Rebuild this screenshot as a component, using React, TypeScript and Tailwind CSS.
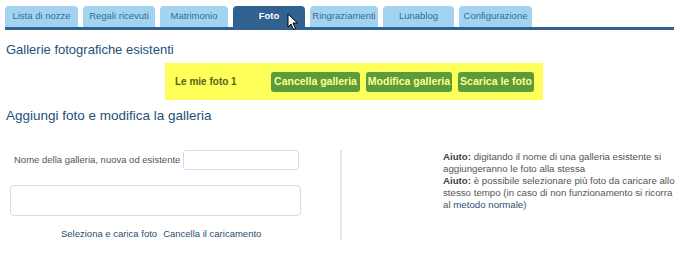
import React from 'react';

const tabs = [
  { label: 'Lista di nozze', w: 'w-[73px]' },
  { label: 'Regali ricevuti', w: 'w-[72px]' },
  { label: 'Matrimonio', w: 'w-[68px]' },
  { label: 'Foto', w: 'w-[72px]', active: true },
  { label: 'Ringraziamenti', w: 'w-[68px]' },
  { label: 'Lunablog', w: 'w-[71px]' },
  { label: 'Configurazione', w: 'w-[73px]' },
];

const buttons = [
  { label: 'Cancella galleria', w: 'w-[89px]' },
  { label: 'Modifica galleria', w: 'w-[86px]' },
  { label: 'Scarica le foto', w: 'w-[76px]' },
];

function Cursor() {
  return (
    <svg className="absolute left-[287px] top-[13px]" width="12" height="18" viewBox="0 0 12 18">
      <path d="M1 1 L1 14 L4 11 L6.5 16.5 L8.5 15.5 L6 10 L10.5 10 Z" fill="#fff" stroke="#000" strokeWidth="1" strokeLinejoin="round" />
    </svg>
  );
}

export default function App() {
  return (
    <div className="relative w-[680px] h-[269px] overflow-hidden bg-white font-['Liberation_Sans',sans-serif]">
      <nav className="pt-[6px] pl-[5px]">
        <div className="flex gap-[5px]">
          {tabs.map((t) => (
            <div
              key={t.label}
              className={`${t.w} h-[21px] rounded-t-[4px] flex items-center justify-center text-[9.5px] whitespace-nowrap ${
                t.active ? 'bg-[#2f6290] text-white font-bold' : 'bg-[#a2d4f2] text-[#3a6a95]'
              }`}
            >
              {t.label}
            </div>
          ))}
        </div>
        <div className="h-[3px] w-[669px] bg-[#2f6290]" />
      </nav>
      <Cursor />

      <h2 className="mt-[12px] ml-[6px] text-[13px] leading-[16px] text-[#24507a]">Gallerie fotografiche esistenti</h2>

      <div className="mt-[5px] ml-[165px] w-[378px] h-[37px] bg-[#ffff5a] flex items-center pl-[10px]">
        <span className="text-[10px] font-bold text-[#56621a] w-[96px] whitespace-nowrap">Le mie foto 1</span>
        <div className="flex gap-[6px]">
          {buttons.map((b) => (
            <span
              key={b.label}
              className={`${b.w} h-[20px] rounded-[3px] bg-[#5b9a3d] text-[#ffff8a] text-[10.5px] font-bold flex items-center justify-center whitespace-nowrap`}
            >
              {b.label}
            </span>
          ))}
        </div>
      </div>

      <h2 className="mt-[7px] ml-[6px] text-[13.5px] leading-[17px] text-[#24507a]">Aggiungi foto e modifica la galleria</h2>

      <div className="mt-[26px] flex">
        <div className="w-[340px] pl-[10px]">
          <div className="flex items-center">
            <span className="w-[173px] pl-[4px] text-[9.5px] text-[#555] whitespace-nowrap">Nome della galleria, nuova od esistente</span>
            <div className="w-[116px] h-[20px] border border-[#c8dff2] rounded-[3px]" />
          </div>
          <div className="mt-[15px] w-[291px] h-[31px] border border-[#c8dff2] rounded-[4px]" />
          <div className="mt-[11px] pl-[51px] flex gap-[6px] text-[9.5px] text-[#2b4d70] whitespace-nowrap">
            <span>Seleziona e carica foto</span>
            <span>Cancella il caricamento</span>
          </div>
        </div>
        <div className="w-[2px] h-[90px] bg-[#e6e6e6]" />
        <div className="ml-[101px] pt-[1px] text-[9.7px] leading-[12px] text-[#555] whitespace-nowrap">
          <p>
            <b className="text-[#444]">Aiuto:</b> digitando il nome di una galleria esistente si
            <br />
            aggiungeranno le foto alla stessa
          </p>
          <p>
            <b className="text-[#444]">Aiuto:</b> è possibile selezionare più foto da caricare allo
            <br />
            stesso tempo (in caso di non funzionamento si ricorra
            <br />
            al <span className="text-[#2b4d70]">metodo normale</span>)
          </p>
        </div>
      </div>
    </div>
  );
}
